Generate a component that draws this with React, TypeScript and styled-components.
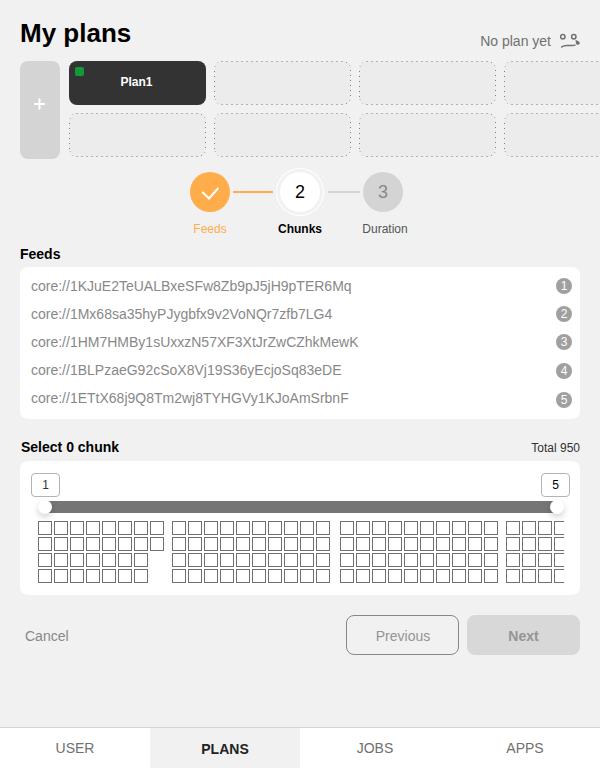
import React from "react";
import styled, { createGlobalStyle, css } from "styled-components";

const GlobalStyle = createGlobalStyle`
  * { box-sizing: border-box; }
  body { margin: 0; background: #f1f1f1; font-family: "Liberation Sans", Arial, sans-serif; }
  button { font-family: inherit; padding: 0; border: 0; background: none; }
`;

const Page = styled.div`
  display: flex;
  flex-direction: column;
  width: 600px;
  height: 768px;
  overflow: hidden;
  background: #f1f1f1;
`;

const Content = styled.main`
  flex: 1;
  min-height: 0;
  padding: 0 20px;
`;

const Header = styled.header`
  display: flex;
  justify-content: space-between;
  height: 61px;
`;

const Title = styled.h1`
  margin: 0;
  padding-top: 18px;
  font-size: 26px;
  line-height: 30px;
  color: #000;
`;

const Status = styled.div`
  display: flex;
  gap: 9px;
  padding-top: 33px;
  font-size: 14px;
  line-height: 16px;
  color: #707070;
  svg { display: block; }
`;

const Plans = styled.section`
  display: flex;
  gap: 9px;
  height: 98px;
  margin-right: -20px;
  overflow: hidden;
`;

const AddButton = styled.button`
  flex: none;
  display: flex;
  align-items: center;
  justify-content: center;
  width: 40px;
  height: 98px;
  padding-right: 2px;
  padding-bottom: 13px;
  border-radius: 8px;
  background: #d4d4d4;
`;

const SlotGrid = styled.div`
  display: grid;
  grid-template-columns: repeat(4, 137px);
  grid-template-rows: 44px 44px;
  gap: 8px;
`;

const PlanCard = styled.div`
  position: relative;
  display: flex;
  align-items: center;
  justify-content: center;
  padding-right: 2px;
  padding-bottom: 2px;
  border-radius: 8px;
  background: #333;
  color: #fff;
  font-size: 12px;
  font-weight: bold;
`;

const PlanState = styled.span`
  position: absolute;
  left: 6px;
  top: 6px;
  width: 9px;
  height: 9px;
  border-radius: 2px;
  background: #129a38;
`;

const SlotOutline = styled.svg`
  display: block;
  width: 137px;
  height: 44px;
`;

const Stepper = styled.section`
  display: flex;
  justify-content: center;
  height: 87px;
  padding-top: 9px;
  margin-left: -7px;
`;

const Step = styled.div`
  display: flex;
  flex-direction: column;
  align-items: center;
  width: 46px;
`;

type StepState = "done" | "current" | "todo";

const StepCircle = styled.div<{ $state: StepState }>`
  flex: none;
  display: flex;
  align-items: center;
  justify-content: center;
  width: 40px;
  height: 40px;
  margin: 4px 0;
  border-radius: 50%;
  font-size: 18px;
  ${({ $state }) =>
    $state === "done"
      ? css`background: #ffad4a;`
      : $state === "current"
      ? css`background: #fff; color: #000; box-shadow: 0 0 0 3px #f1f1f1, 0 0 0 4px #fff;`
      : css`background: #d4d4d4; color: #888;`}
`;

const StepLabel = styled.div<{ $state: StepState }>`
  margin-top: 6px;
  font-size: 12px;
  line-height: 14px;
  white-space: nowrap;
  color: ${({ $state }) => ($state === "done" ? "#ffad4a" : $state === "current" ? "#000" : "#555")};
  font-weight: ${({ $state }) => ($state === "current" ? "bold" : "normal")};
`;

const Duration = styled(StepLabel)`
  margin-left: 4px;
`;

const Connector = styled.div<{ $width: number; $color: string; $left: number; $right: number }>`
  width: ${(p) => p.$width}px;
  height: 2px;
  margin: 23px ${(p) => p.$right}px 0 ${(p) => p.$left}px;
  background: ${(p) => p.$color};
`;

const SectionTitle = styled.h2`
  margin: 0;
  font-size: 14px;
  line-height: 16px;
  color: #000;
`;

const FeedsTitle = styled(SectionTitle)`
  height: 21px;
`;

const Card = styled.section`
  border-radius: 8px;
  background: #fff;
`;

const FeedsCard = styled(Card)`
  display: flex;
  justify-content: space-between;
  height: 152px;
  padding: 11px 8px 0 11px;
`;

const FeedList = styled.div`
  color: #888;
  font-size: 14px;
  line-height: 16px;
`;

const FeedName = styled.div`
  height: 28px;
`;

const Badges = styled.div`
  display: flex;
  flex-direction: column;
  gap: 12px;
`;

const Badge = styled.span`
  display: flex;
  align-items: center;
  justify-content: center;
  width: 16px;
  height: 16px;
  border-radius: 50%;
  background: #a0a0a0;
  color: #fff;
  font-size: 12px;
  &:nth-child(n + 4) { margin-top: 1px; }
`;

const ChunkHeading = styled.div`
  display: flex;
  justify-content: space-between;
  height: 42px;
  padding: 20px 0 0 1px;
`;

const Total = styled.span`
  font-size: 12px;
  line-height: 18px;
  color: #333;
`;

const ChunkCard = styled(Card)`
  height: 134px;
  padding: 12px 10px 0 11px;
`;

const RangeLabels = styled.div`
  display: flex;
  justify-content: space-between;
`;

const RangeValue = styled.span<{ $color: string }>`
  display: flex;
  align-items: center;
  justify-content: center;
  width: 29px;
  height: 24px;
  border: 1px solid #b3b3b3;
  border-radius: 4px;
  color: ${(p) => p.$color};
  font-size: 12px;
`;

const Track = styled.div`
  display: flex;
  align-items: center;
  justify-content: space-between;
  height: 12px;
  margin: 4px 6px 0 7px;
  background: linear-gradient(#757575, #757575) 7px 0 / 512px 12px no-repeat;
`;

const Knob = styled.span`
  width: 14px;
  height: 14px;
  border-radius: 50%;
  background: #fff;
  box-shadow: 0 3px 6px rgba(0, 0, 0, 0.18);
`;

const ChunkStrip = styled.div`
  display: flex;
  gap: 8px;
  width: 526px;
  margin: 8px 0 0 7px;
  overflow: hidden;
`;

const ChunkGroup = styled.div`
  flex: none;
  display: flex;
  gap: 2px;
  &:nth-child(3) { margin-left: 2px; }
`;

const ChunkColumn = styled.div`
  display: flex;
  flex-direction: column;
  gap: 2px;
`;

const Chunk = styled.span`
  width: 14px;
  height: 14px;
  border: 1px solid #707070;
`;

const Actions = styled.div`
  display: flex;
  gap: 8px;
  margin-top: 20px;
`;

const CancelButton = styled.button`
  height: 40px;
  padding: 2px 0 0 5px;
  margin-right: auto;
  font-size: 14px;
  color: #888;
`;

const ActionButton = styled.button<{ $primary?: boolean }>`
  width: 113px;
  height: 40px;
  padding-top: 2px;
  padding-left: ${(p) => (p.$primary ? 0 : 1)}px;
  border: 1px solid ${(p) => (p.$primary ? "#d8d8d8" : "#888")};
  border-radius: 8px;
  background: ${(p) => (p.$primary ? "#d8d8d8" : "transparent")};
  color: #949494;
  font-size: 14px;
  font-weight: ${(p) => (p.$primary ? "bold" : "normal")};
`;

const TabBar = styled.nav`
  flex: none;
  display: grid;
  grid-template-columns: repeat(4, 150px);
  height: 41px;
  border-top: 1px solid #d4d4d4;
`;

const Tab = styled.button<{ $active?: boolean }>`
  padding-bottom: ${(p) => (p.$active ? 0 : 1)}px;
  padding-top: ${(p) => (p.$active ? 1 : 0)}px;
  background: ${(p) => (p.$active ? "#f1f1f1" : "#fff")};
  color: ${(p) => (p.$active ? "#222" : "#707070")};
  font-size: 14px;
  font-weight: ${(p) => (p.$active ? "bold" : "normal")};
`;

const feeds = [
  "core://1KJuE2TeUALBxeSFw8Zb9pJ5jH9pTER6Mq",
  "core://1Mx68sa35hyPJygbfx9v2VoNQr7zfb7LG4",
  "core://1HM7HMBy1sUxxzN57XF3XtJrZwCZhkMewK",
  "core://1BLPzaeG92cSoX8Vj19S36yEcjoSq83eDE",
  "core://1ETtX68j9Q8Tm2wj8TYHGVy1KJoAmSrbnF",
];

// Number of chunks in each column, one list per group.
const chunkGroups = [
  [4, 4, 4, 4, 4, 4, 4, 2],
  Array(10).fill(4),
  Array(10).fill(4),
  Array(10).fill(4),
];

// Dotted outline: soft dashes along the top and bottom, single dots on the sides.
const EmptySlot = () => (
  <SlotOutline viewBox="0 0 137 44" fill="none">
    <rect width="137" height="44" rx="8" fill="#ececec" />
    <path d="M7 .5h122M7 43.5h122" stroke="#b4b4b4" strokeDasharray="2 3" />
    <path d="M.5 10v26M136.5 9v26" stroke="#808080" strokeDasharray="1 4" />
    <path d="M132 1.500h1M132 42.500h1" stroke="#909090" />
    <path d="M3 1.500h1M3 42.500h1M.5 5.500h1.500M.5 38.500h1.500M135 4.500h1.500M135 39.500h1.500" stroke="#c4c4c4" />
  </SlotOutline>
);

const SadFace = () => (
  <svg width="20" height="16" viewBox="0 0 20 16" fill="none" stroke="#707070" strokeWidth="1.5">
    <circle cx="2.8" cy="3.8" r="2.2" />
    <circle cx="13.8" cy="3.8" r="2.2" />
    <path d="M1.6 14C3.200 12.600 5 12.400 7 12.400h4.500c1.500 .1 2.600 0 3.500-.3" strokeLinecap="round" />
    <path d="M15.500 6.800l3.400 1.600c1.300 .900 1.100 2.700-.200 3.200-1.400 .600-2.700-.200-2.800-1.600z" fill="#707070" stroke="none" />
  </svg>
);

export default function App() {
  return (
    <Page>
      <GlobalStyle />
      <Content>
        <Header>
          <Title>My plans</Title>
          <Status>
            No plan yet
            <SadFace />
          </Status>
        </Header>
        <Plans>
          <AddButton aria-label="Add plan">
            <svg width="12" height="12" viewBox="0 0 12 12" stroke="#fff" strokeWidth="2" strokeLinecap="round">
              <path d="M6.500 1.300v9.400M1.800 6h9.400" />
            </svg>
          </AddButton>
          <SlotGrid>
            <PlanCard>
              <PlanState />
              Plan1
            </PlanCard>
            {Array.from({ length: 7 }, (_, i) => (
              <EmptySlot key={i} />
            ))}
          </SlotGrid>
        </Plans>
        <Stepper>
          <Step>
            <StepCircle $state="done">
              <svg width="20" height="16" viewBox="0 0 20 16" fill="none" stroke="#fff" strokeWidth="2">
                <path d="M2.300 8l6.700 6.500 9.300-10.500" />
              </svg>
            </StepCircle>
            <StepLabel $state="done">Feeds</StepLabel>
          </Step>
          <Connector $width={40} $color="#ffad4a" $left={0} $right={4} />
          <Step>
            <StepCircle $state="current">2</StepCircle>
            <StepLabel $state="current">Chunks</StepLabel>
          </Step>
          <Connector $width={32} $color="#d4d4d4" $left={5} $right={0} />
          <Step>
            <StepCircle $state="todo">3</StepCircle>
            <Duration $state="todo">Duration</Duration>
          </Step>
        </Stepper>
        <FeedsTitle>Feeds</FeedsTitle>
        <FeedsCard>
          <FeedList>
            {feeds.map((feed) => (
              <FeedName key={feed}>{feed}</FeedName>
            ))}
          </FeedList>
          <Badges>
            {feeds.map((feed, i) => (
              <Badge key={feed}>{i + 1}</Badge>
            ))}
          </Badges>
        </FeedsCard>
        <ChunkHeading>
          <SectionTitle>Select 0 chunk</SectionTitle>
          <Total>Total 950</Total>
        </ChunkHeading>
        <ChunkCard>
          <RangeLabels>
            <RangeValue $color="#333">1</RangeValue>
            <RangeValue $color="#000">5</RangeValue>
          </RangeLabels>
          <Track>
            <Knob />
            <Knob />
          </Track>
          <ChunkStrip>
            {chunkGroups.map((columns, g) => (
              <ChunkGroup key={g}>
                {columns.map((count, c) => (
                  <ChunkColumn key={c}>
                    {Array.from({ length: count }, (_, i) => (
                      <Chunk key={i} />
                    ))}
                  </ChunkColumn>
                ))}
              </ChunkGroup>
            ))}
          </ChunkStrip>
        </ChunkCard>
        <Actions>
          <CancelButton>Cancel</CancelButton>
          <ActionButton>Previous</ActionButton>
          <ActionButton $primary>Next</ActionButton>
        </Actions>
      </Content>
      <TabBar>
        <Tab>USER</Tab>
        <Tab $active>PLANS</Tab>
        <Tab>JOBS</Tab>
        <Tab>APPS</Tab>
      </TabBar>
    </Page>
  );
}
